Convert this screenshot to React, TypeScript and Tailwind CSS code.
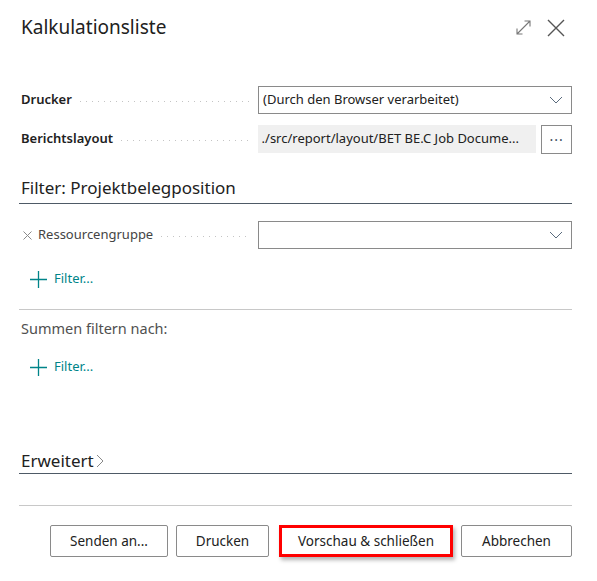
import React from "react";

const font = { fontFamily: '"Segoe UI", "Noto Sans", "Open Sans", sans-serif' };

function Leader() {
  return (
    <div className="flex-1 mx-2 h-px mt-[3px] bg-[repeating-linear-gradient(to_right,#c4c4c4_0_1px,transparent_1px_6px)]" />
  );
}

function Chevron() {
  return (
    <svg width="14" height="8" viewBox="0 0 14 8" className="text-[#5a6b7d]">
      <path d="M1 1l6 6 6-6" fill="none" stroke="currentColor" strokeWidth="1" />
    </svg>
  );
}

function Plus() {
  return (
    <svg width="17" height="17" viewBox="0 0 17 17" className="text-[#008489]">
      <path d="M8.5 0v17M0 8.5h17" stroke="currentColor" strokeWidth="1.3" />
    </svg>
  );
}

function AddFilter() {
  return (
    <div className="flex items-center gap-[7px] pl-[9px] h-[20px]">
      <Plus />
      <span className="text-[13px] text-[#008489]">Filter...</span>
    </div>
  );
}

export default function App() {
  return (
    <div className="w-[597px] h-[581px] bg-white text-[#212121] pl-[21px] pr-[25px]" style={font}>
      {/* Header */}
      <div className="flex items-center justify-between pt-[13px] h-[41px]">
        <h1 className="text-[19px] leading-[28px] font-normal">Kalkulationsliste</h1>
        <div className="flex items-center gap-[15px] pr-[7px] pt-[1px]">
          <svg width="17" height="17" viewBox="0 0 17 17" className="text-[#777]">
            <path d="M2 15L15 2M9.5 2H15v5.5M2 9.5V15h5.5" fill="none" stroke="currentColor" strokeWidth="1.1" />
          </svg>
          <svg width="18" height="18" viewBox="0 0 18 18" className="text-[#555]">
            <path d="M1 1l16 16M17 1L1 17" fill="none" stroke="currentColor" strokeWidth="1.4" />
          </svg>
        </div>
      </div>

      {/* Main fields */}
      <div className="mt-[45px] flex flex-col gap-[11px]">
        <div className="flex items-center h-[28px]">
          <div className="w-[237px] flex items-center">
            <span className="text-[13px] font-semibold">Drucker</span>
            <Leader />
          </div>
          <div className="flex-1 h-[28px] border border-[#8a8a8a] flex items-center justify-between pl-[4px] pr-[8px]">
            <span className="text-[13px]">(Durch den Browser verarbeitet)</span>
            <Chevron />
          </div>
        </div>
        <div className="flex items-center h-[28px]">
          <div className="w-[237px] flex items-center">
            <span className="text-[13px] font-semibold">Berichtslayout</span>
            <Leader />
          </div>
          <div className="w-[279px] h-[28px] bg-[#f0f0f0] flex items-center pl-[4px] overflow-hidden">
            <span className="text-[13px] whitespace-nowrap">./src/report/layout/BET BE.C Job Docume...</span>
          </div>
          <div className="ml-[5px] w-[31px] h-[29px] border border-[#8a8a8a] flex items-center justify-center">
            <span className="text-[14px] leading-none tracking-[1px] text-[#3b4a5c] -mt-[6px]">...</span>
          </div>
        </div>
      </div>

      {/* Filter section */}
      <div className="mt-[22px] border-b border-[#4e5a66] h-[29px] -ml-[2px] pl-[2px]">
        <h2 className="text-[17px] leading-[26px] font-normal">Filter: Projektbelegposition</h2>
      </div>
      <div className="mt-[17px] flex items-center h-[28px]">
        <div className="w-[237px] flex items-center">
          <svg width="9" height="9" viewBox="0 0 9 9" className="ml-[2px] mr-[6px] text-[#8a8a8a]">
            <path d="M0.5 0.5l8 8M8.5 0.5l-8 8" fill="none" stroke="currentColor" strokeWidth="1" />
          </svg>
          <span className="text-[13px] text-[#444]">Ressourcengruppe</span>
          <Leader />
        </div>
        <div className="flex-1 h-[28px] border border-[#8a8a8a] flex items-center justify-end pr-[8px]">
          <Chevron />
        </div>
      </div>
      <div className="mt-[20px]">
        <AddFilter />
      </div>

      <div className="mt-[20px] border-t border-[#c8c8c8] -ml-[2px]" />
      <div className="mt-[8px] text-[14.5px] text-[#505050] leading-[20px]">Summen filtern nach:</div>
      <div className="mt-[19px]">
        <AddFilter />
      </div>

      {/* Erweitert */}
      <div className="mt-[71px] border-b border-[#4e5a66] h-[26px] -ml-[2px] pl-[2px] flex items-center">
        <h2 className="text-[17px] leading-[24px] font-normal">Erweitert</h2>
        <svg width="8" height="14" viewBox="0 0 8 14" className="ml-[2px] text-[#888]">
          <path d="M1 1l6 6-6 6" fill="none" stroke="currentColor" strokeWidth="1" />
        </svg>
      </div>
      <div className="mt-[31px] border-t border-[#c8c8c8] -ml-[2px]" />

      {/* Buttons */}
      <div className="mt-[19px] flex items-center justify-end gap-[8px]">
        <button className="w-[118px] h-[32px] border border-[#8a8a8a] rounded-[2px] text-[13.5px] bg-white">Senden an...</button>
        <button className="w-[93px] h-[32px] border border-[#8a8a8a] rounded-[2px] text-[13.5px] bg-white">Drucken</button>
        <div className="ml-[2px] border-[3px] border-[#ff0000] shadow-[2px_3px_4px_rgba(0,0,0,0.3)]">
          <button className="w-[168px] h-[26px] text-[13.5px] bg-white">Vorschau &amp; schließen</button>
        </div>
        <button className="w-[111px] h-[32px] border border-[#8a8a8a] rounded-[2px] text-[13.5px] bg-white">Abbrechen</button>
      </div>
    </div>
  );
}
